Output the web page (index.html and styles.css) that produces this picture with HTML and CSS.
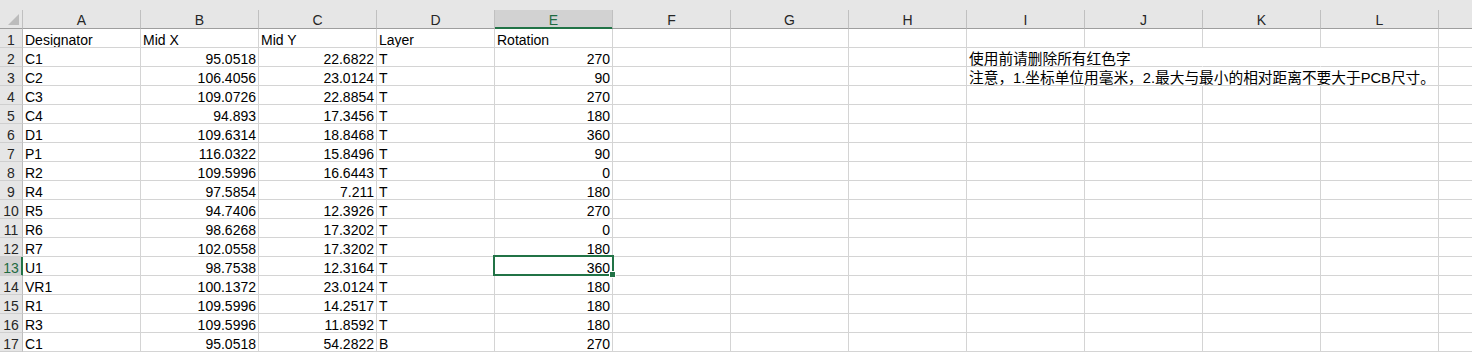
FILE: index.html
```html
<!DOCTYPE html>
<html lang="zh-CN">
<head>
    <meta charset="UTF-8">
    <meta name="viewport" content="width=device-width, initial-scale=1.0">
    <title>坐标文件</title>
    <link rel="stylesheet" href="styles.css">
</head>
<body>

<!-- Strip above the column letters -->
<div class="topbar"></div>

<!-- Sheet -->
<table class="sheet">
    <colgroup>
        <col class="rh-col">
        <col><col><col><col><col><col><col><col><col><col><col><col><col>
    </colgroup>
    <tr class="colhead">
        <th class="corner"><svg width="22" height="18" viewBox="0 0 22 18"><polygon points="19,4 19,15 8,15" fill="#bcbcbc"/></svg></th>
        <th>A</th><th>B</th><th>C</th><th>D</th><th class="col-sel">E</th><th>F</th><th>G</th><th>H</th><th>I</th><th>J</th><th>K</th><th>L</th><th class="edge"></th>
    </tr>
    <tr>
        <th class="rh">1</th>
        <td>Designator</td><td>Mid X</td><td>Mid Y</td><td>Layer</td><td>Rotation</td>
        <td></td><td></td><td></td><td></td><td></td><td></td><td></td><td></td>
    </tr>
    <tr>
        <th class="rh">2</th>
        <td>C1</td><td class="num">95.0518</td><td class="num">22.6822</td><td>T</td><td class="num">270</td>
        <td></td><td></td><td></td>
        <td class="spill"><div class="note">使用前请删除所有红色字</div></td><td class="spill"></td><td class="spill"></td><td></td><td></td>
    </tr>
    <tr>
        <th class="rh">3</th>
        <td>C2</td><td class="num">106.4056</td><td class="num">23.0124</td><td>T</td><td class="num">90</td>
        <td></td><td></td><td></td>
        <td class="spill"><div class="note">注意，1.坐标单位用毫米，2.最大与最小的相对距离不要大于PCB尺寸。</div></td><td class="spill"></td><td class="spill"></td><td></td><td></td>
    </tr>
    <tr>
        <th class="rh">4</th>
        <td>C3</td><td class="num">109.0726</td><td class="num">22.8854</td><td>T</td><td class="num">270</td>
        <td></td><td></td><td></td><td></td><td></td><td></td><td></td><td></td>
    </tr>
    <tr>
        <th class="rh">5</th>
        <td>C4</td><td class="num">94.893</td><td class="num">17.3456</td><td>T</td><td class="num">180</td>
        <td></td><td></td><td></td><td></td><td></td><td></td><td></td><td></td>
    </tr>
    <tr>
        <th class="rh">6</th>
        <td>D1</td><td class="num">109.6314</td><td class="num">18.8468</td><td>T</td><td class="num">360</td>
        <td></td><td></td><td></td><td></td><td></td><td></td><td></td><td></td>
    </tr>
    <tr>
        <th class="rh">7</th>
        <td>P1</td><td class="num">116.0322</td><td class="num">15.8496</td><td>T</td><td class="num">90</td>
        <td></td><td></td><td></td><td></td><td></td><td></td><td></td><td></td>
    </tr>
    <tr>
        <th class="rh">8</th>
        <td>R2</td><td class="num">109.5996</td><td class="num">16.6443</td><td>T</td><td class="num">0</td>
        <td></td><td></td><td></td><td></td><td></td><td></td><td></td><td></td>
    </tr>
    <tr>
        <th class="rh">9</th>
        <td>R4</td><td class="num">97.5854</td><td class="num">7.211</td><td>T</td><td class="num">180</td>
        <td></td><td></td><td></td><td></td><td></td><td></td><td></td><td></td>
    </tr>
    <tr>
        <th class="rh">10</th>
        <td>R5</td><td class="num">94.7406</td><td class="num">12.3926</td><td>T</td><td class="num">270</td>
        <td></td><td></td><td></td><td></td><td></td><td></td><td></td><td></td>
    </tr>
    <tr>
        <th class="rh">11</th>
        <td>R6</td><td class="num">98.6268</td><td class="num">17.3202</td><td>T</td><td class="num">0</td>
        <td></td><td></td><td></td><td></td><td></td><td></td><td></td><td></td>
    </tr>
    <tr>
        <th class="rh">12</th>
        <td>R7</td><td class="num">102.0558</td><td class="num">17.3202</td><td>T</td><td class="num">180</td>
        <td></td><td></td><td></td><td></td><td></td><td></td><td></td><td></td>
    </tr>
    <tr>
        <th class="rh row-sel">13</th>
        <td>U1</td><td class="num">98.7538</td><td class="num">12.3164</td><td>T</td><td class="num sel">360</td>
        <td></td><td></td><td></td><td></td><td></td><td></td><td></td><td></td>
    </tr>
    <tr>
        <th class="rh">14</th>
        <td>VR1</td><td class="num">100.1372</td><td class="num">23.0124</td><td>T</td><td class="num">180</td>
        <td></td><td></td><td></td><td></td><td></td><td></td><td></td><td></td>
    </tr>
    <tr>
        <th class="rh">15</th>
        <td>R1</td><td class="num">109.5996</td><td class="num">14.2517</td><td>T</td><td class="num">180</td>
        <td></td><td></td><td></td><td></td><td></td><td></td><td></td><td></td>
    </tr>
    <tr>
        <th class="rh">16</th>
        <td>R3</td><td class="num">109.5996</td><td class="num">11.8592</td><td>T</td><td class="num">180</td>
        <td></td><td></td><td></td><td></td><td></td><td></td><td></td><td></td>
    </tr>
    <tr>
        <th class="rh">17</th>
        <td>C1</td><td class="num">95.0518</td><td class="num">54.2822</td><td>B</td><td class="num">270</td>
        <td></td><td></td><td></td><td></td><td></td><td></td><td></td><td></td>
    </tr>
</table>

</body>
</html>
```

FILE: styles.css
```css
body {
    margin: 0;
    font-family: "Liberation Sans", "Noto Sans CJK SC", sans-serif;
    font-size: 14px;
    color: #000;
    background-color: #fff;
    overflow: hidden;
}
.topbar {
    height: 10px;
    background-color: #e6e6e6;
}
.sheet {
    border-collapse: separate;
    border-spacing: 0;
    table-layout: fixed;
    width: 1557px;
}
.sheet col {
    width: 118px;
}
.sheet col.rh-col {
    width: 23px;
}
.sheet th,
.sheet td {
    box-sizing: border-box;
    height: 19px;
    line-height: 14px;
    white-space: nowrap;
    overflow: hidden;
    vertical-align: top;
}
.sheet td {
    padding: 4px 2px 0;
    border-right: 1px solid #d4d4d4;
    border-bottom: 1px solid #d4d4d4;
}
.sheet td.num {
    text-align: right;
}
.sheet td.spill {
    border-right-color: transparent;
    overflow: visible;
}
.note {
    height: 14px;
    font-size: 14.7px;
    white-space: nowrap;
}

/* Column letters */
.colhead th {
    padding: 3px 0 1px;
    background-color: #e6e6e6;
    color: #262626;
    font-weight: normal;
    text-align: center;
    border-right: 1px solid #c0c0c0;
    border-bottom: 1px solid #9e9e9e;
}
.colhead th.corner {
    padding: 0;
    vertical-align: top;
    line-height: 0;
}
.colhead th.col-sel {
    background-color: #d2d2d2;
    color: #1e6b41;
    border-bottom-color: #217346;
    box-shadow: inset 0 -1px 0 #217346;
}
.colhead th.edge {
    border-right: none;
}

/* Row numbers */
.sheet th.rh {
    padding: 4px 0 0;
    background-color: #e6e6e6;
    color: #262626;
    font-weight: normal;
    text-align: center;
    border-right: 1px solid #bdbdbd;
    border-bottom: 1px solid #cfcfcf;
}
.sheet th.row-sel {
    background-color: #d2d2d2;
    color: #1e6b41;
    border-right-color: #217346;
    box-shadow: inset -1px 0 0 #217346;
}

/* Active cell */
.sheet td.sel {
    position: relative;
    overflow: visible;
}
.sheet td.sel::after {
    content: '';
    position: absolute;
    left: -2px;
    top: -2px;
    right: -2px;
    bottom: -1px;
    border: 2px solid #217346;
}
.sheet td.sel::before {
    content: '';
    position: absolute;
    left: 115px;
    top: 15px;
    width: 5px;
    height: 5px;
    background-color: #217346;
    box-shadow: 0 0 0 1px #fff;
    z-index: 1;
}
```
